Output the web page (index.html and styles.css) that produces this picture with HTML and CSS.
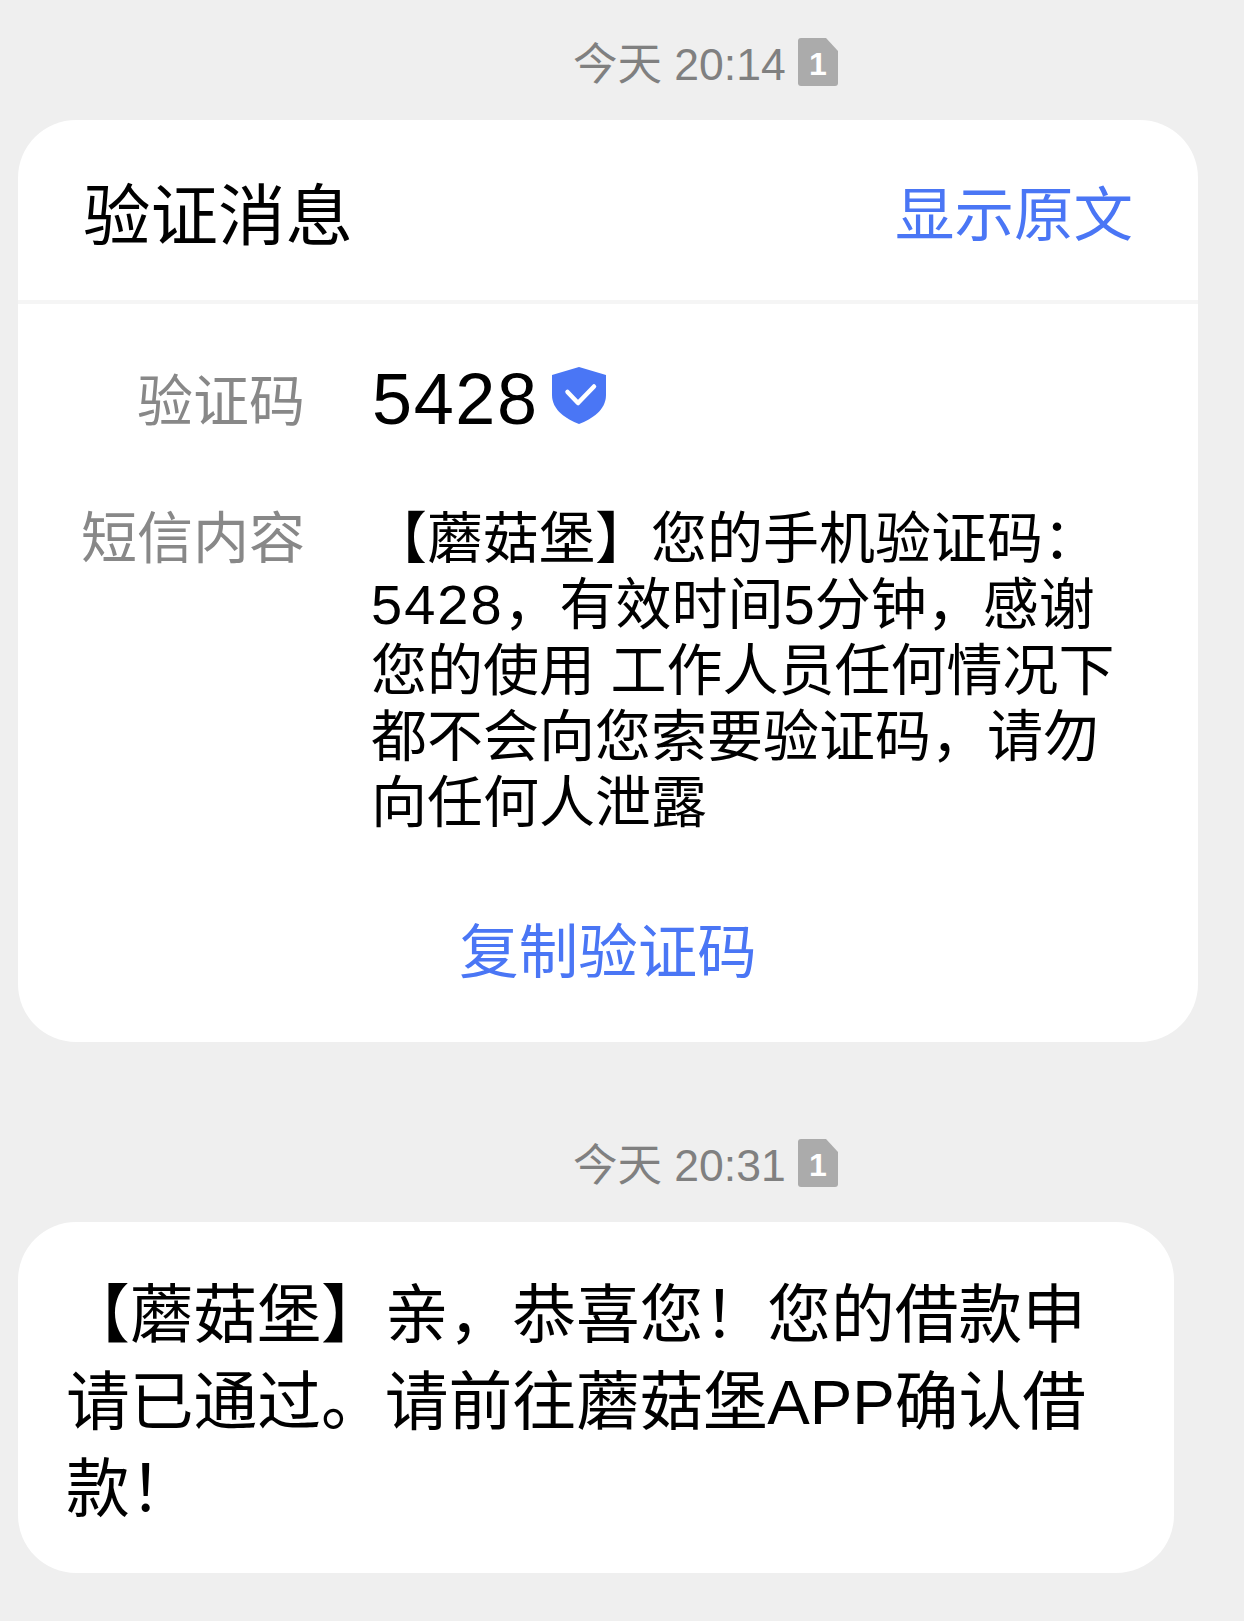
FILE: index.html
```html
<!DOCTYPE html>
<html lang="zh">
  <head>
    <meta charset="UTF-8">
    <title>短信</title>
    <link rel="stylesheet" href="styles.css">
  </head>
  <body>
    <div class="time">
      <span>今天 20:14</span>
      <svg class="sim" viewBox="0 0 40 48"><path d="M3 0H28L40 13V45a3 3 0 0 1-3 3H3a3 3 0 0 1-3-3V3a3 3 0 0 1 3-3Z" fill="#ababab"/><text x="20" y="37" text-anchor="middle" class="sim-num">1</text></svg>
    </div>

    <section class="card">
      <header class="card-head">
        <h2>验证消息</h2>
        <a>显示原文</a>
      </header>
      <div class="row row-code">
        <div class="label">验证码</div>
        <div class="code">
          <span>5428</span>
          <svg class="shield" viewBox="0 0 54 57"><path d="M27 0L54 8V28C54 43 40 52 27 57C14 52 0 43 0 28V8Z" fill="#4a76f5"/><path d="M15.5 25L26 36L42 19.5" fill="none" stroke="#fff" stroke-width="4.5" stroke-linecap="round" stroke-linejoin="round"/></svg>
        </div>
      </div>
      <div class="row">
        <div class="label">短信内容</div>
        <div class="content">【蘑菇堡】您的手机验证码：<br><span class="num">5428</span>，有效时间5分钟，感谢<br>您的使用 工作人员任何情况下<br>都不会向您索要验证码，请勿<br>向任何人泄露</div>
      </div>
      <div class="copy">复制验证码</div>
    </section>

    <div class="time time-two">
      <span>今天 20:31</span>
      <svg class="sim" viewBox="0 0 40 48"><path d="M3 0H28L40 13V45a3 3 0 0 1-3 3H3a3 3 0 0 1-3-3V3a3 3 0 0 1 3-3Z" fill="#ababab"/><text x="20" y="37" text-anchor="middle" class="sim-num">1</text></svg>
    </div>

    <section class="bubble">【蘑菇堡】亲，恭喜您！您的借款申<br>请已通过。请前往蘑菇堡APP确认借<br>款！</section>
  </body>
</html>
```

FILE: styles.css
```css
body {
    margin: 0;
    height: 1621px;
    overflow: hidden;
    background: #efefef;
    color: #000;
    font-family: "Liberation Sans", "Noto Sans CJK SC", sans-serif;
}
.time {
    display: flex;
    align-items: center;
    gap: 12px;
    height: 48px;
    padding: 38px 0 34px 573px;
    color: #808080;
    font-size: 44.5px;
}
.time span {
    margin-bottom: 3px;
}
.time-two {
    padding-top: 0;
    padding-bottom: 35px;
}
.sim {
    width: 40px;
    height: 48px;
}
.sim-num {
    fill: #fff;
    font-size: 32px;
    font-weight: bold;
}
.card {
    width: 1180px;
    height: 922px;
    margin: 0 0 97px 18px;
    background: #fff;
    border-radius: 58px;
    overflow: hidden;
}
.card-head {
    display: flex;
    justify-content: space-between;
    align-items: center;
    height: 180px;
    padding: 0 65px;
    border-bottom: 4px solid #f5f5f5;
}
.card-head h2 {
    margin: 0;
    font-size: 67.5px;
    font-weight: normal;
}
.card-head a {
    color: #4a76f5;
    font-size: 59.5px;
}
.row {
    display: flex;
    margin-top: 62px;
}
.row-code {
    align-items: center;
    height: 90px;
    margin-top: 50px;
}
.row-code .label {
    padding-top: 6px;
}
.label {
    width: 287px;
    margin-right: 66px;
    color: #888;
    font-size: 56px;
    line-height: 66px;
    text-align: right;
}
.code {
    display: flex;
    align-items: center;
    gap: 13px;
    padding-left: 1px;
    font-size: 72px;
    letter-spacing: 1.6px;
}
.shield {
    width: 54px;
    height: 57px;
    margin-bottom: 8px;
}
.content {
    font-size: 56px;
    line-height: 66px;
    white-space: nowrap;
}
.num {
    letter-spacing: 2px;
}
.copy {
    margin-top: 68px;
    color: #4a76f5;
    font-size: 59.5px;
    text-align: center;
}
.bubble {
    width: 1108px;
    height: 301px;
    margin-left: 18px;
    padding: 50px 0 0 48px;
    background: #fff;
    border-radius: 58px;
    font-size: 63.75px;
    line-height: 87px;
    white-space: nowrap;
}
```
